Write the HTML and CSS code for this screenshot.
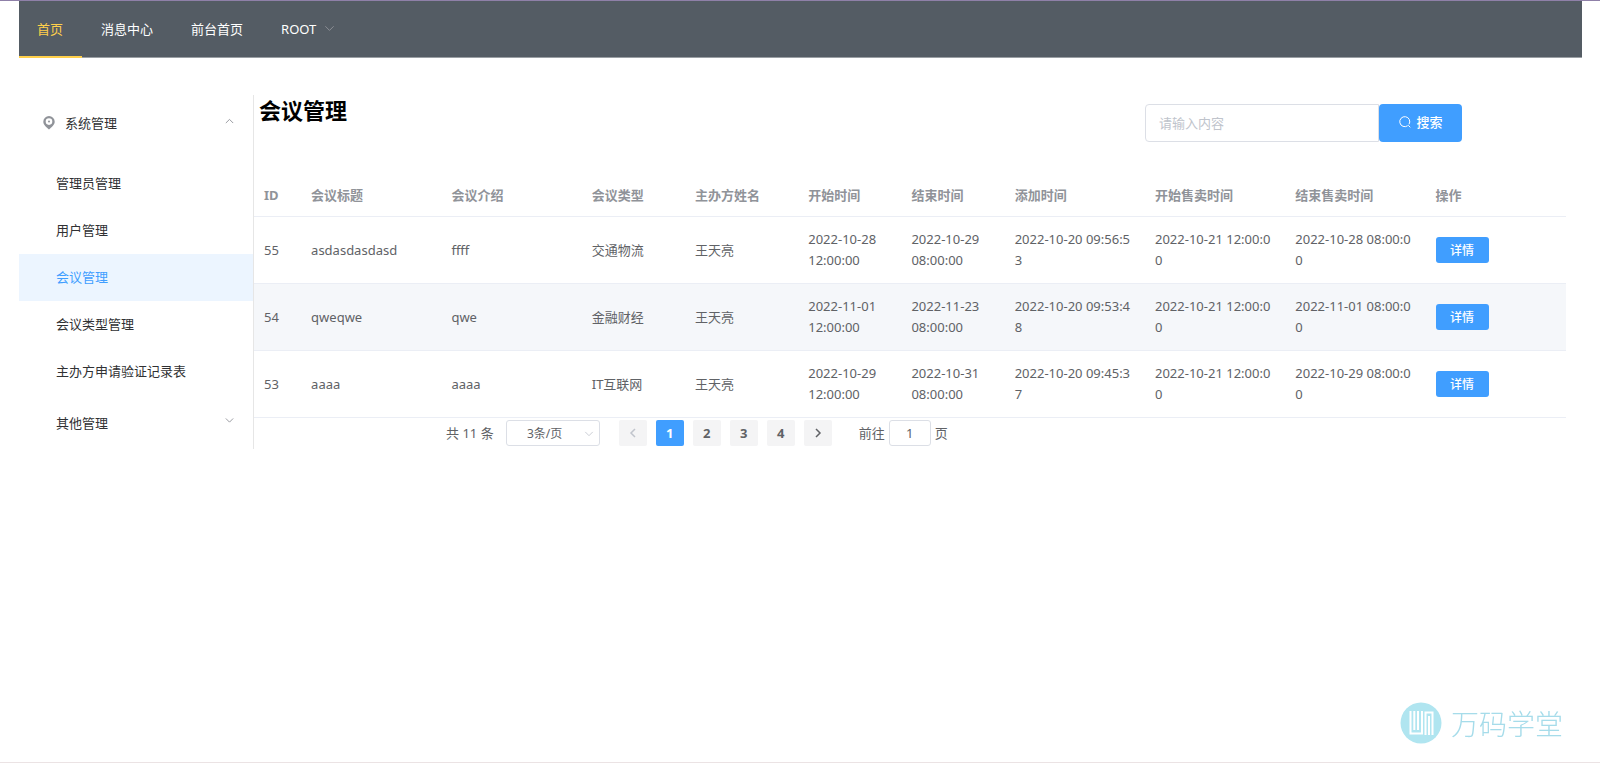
FILE: index.html
```html
<!DOCTYPE html>
<html lang="zh-CN">
<head>
<meta charset="utf-8">
<title>会议管理</title>
<link rel="stylesheet" href="styles.css">
</head>
<body>
<div class="page">
  <nav class="topnav">
    <a class="topnav-item active" href="#">首页</a>
    <a class="topnav-item" href="#">消息中心</a>
    <a class="topnav-item" href="#">前台首页</a>
    <a class="topnav-item" href="#">ROOT
      <svg class="chevron" viewBox="0 0 12 12"><path d="M1.500 2.500L6 7L10.500 2.500"/></svg>
    </a>
  </nav>

  <div class="body">
    <aside class="sidebar">
      <button class="group-title" type="button">
        <svg class="pin" viewBox="0 0 14 16"><path fill-rule="evenodd" d="M7 1a5.700 5.700 0 0 0-5.700 5.700C1.300 10.200 4.600 12 7 14.500c2.400-2.500 5.700-4.300 5.700-7.800A5.700 5.700 0 0 0 7 1zm0 2.300a3.300 3.300 0 1 1 0 6.600 3.300 3.300 0 0 1 0-6.600z"/><circle cx="7" cy="6.500" r="1"/></svg>
        <span>系统管理</span>
        <svg class="chevron" viewBox="0 0 12 12"><path d="M2 5.500L6 1.500L10 5.500"/></svg>
      </button>
      <ul class="menu">
        <li><a href="#">管理员管理</a></li>
        <li><a href="#">用户管理</a></li>
        <li><a class="active" href="#">会议管理</a></li>
        <li><a href="#">会议类型管理</a></li>
        <li><a href="#">主办方申请验证记录表</a></li>
      </ul>
      <button class="group-title other" type="button">
        <span>其他管理</span>
        <svg class="chevron" viewBox="0 0 12 12"><path d="M2 0.500L6 4.500L10 0.500"/></svg>
      </button>
    </aside>

    <main class="main">
      <header class="main-head">
        <h1>会议管理</h1>
        <form class="search">
          <input type="text" placeholder="请输入内容" aria-label="请输入内容">
          <button type="button">
            <svg viewBox="0 0 14 14"><path d="M9.700 10.700A5 5 0 1 1 11 9.300M10.300 10.300L12.300 12.300"/></svg>
            <span>搜索</span>
          </button>
        </form>
      </header>

      <table class="table">
        <colgroup>
          <col class="c-id"><col class="c-wide"><col class="c-wide"><col class="c-time"><col class="c-host">
          <col class="c-time"><col class="c-time"><col class="c-wide"><col class="c-wide"><col class="c-wide"><col class="c-wide">
        </colgroup>
        <thead>
          <tr><th>ID</th><th>会议标题</th><th>会议介绍</th><th>会议类型</th><th>主办方姓名</th><th>开始时间</th><th>结束时间</th><th>添加时间</th><th>开始售卖时间</th><th>结束售卖时间</th><th>操作</th></tr>
        </thead>
        <tbody>
          <tr><td>55</td><td>asdasdasdasd</td><td>ffff</td><td>交通物流</td><td>王天亮</td><td>2022-10-28<br>12:00:00</td><td>2022-10-29<br>08:00:00</td><td>2022-10-20 09:56:53</td><td>2022-10-21 12:00:00</td><td>2022-10-28 08:00:00</td><td><button class="detail" type="button">详情</button></td></tr>
          <tr><td>54</td><td>qweqwe</td><td>qwe</td><td>金融财经</td><td>王天亮</td><td>2022-11-01<br>12:00:00</td><td>2022-11-23<br>08:00:00</td><td>2022-10-20 09:53:48</td><td>2022-10-21 12:00:00</td><td>2022-11-01 08:00:00</td><td><button class="detail" type="button">详情</button></td></tr>
          <tr><td>53</td><td>aaaa</td><td>aaaa</td><td>IT互联网</td><td>王天亮</td><td>2022-10-29<br>12:00:00</td><td>2022-10-31<br>08:00:00</td><td>2022-10-20 09:45:37</td><td>2022-10-21 12:00:00</td><td>2022-10-29 08:00:00</td><td><button class="detail" type="button">详情</button></td></tr>
        </tbody>
      </table>

      <div class="pagination">
        <span class="total">共 11 条</span>
        <span class="size">
          <select aria-label="每页条数"><option>3条/页</option></select>
          <svg class="chevron" viewBox="0 0 12 12"><path d="M1.500 3.500L6 8L10.500 3.500"/></svg>
        </span>
        <div class="pager">
          <button type="button" disabled aria-label="上一页"><svg viewBox="0 0 12 12"><path d="M8 2L4 6L8 10"/></svg></button>
          <button type="button" class="current">1</button>
          <button type="button">2</button>
          <button type="button">3</button>
          <button type="button">4</button>
          <button type="button" aria-label="下一页"><svg viewBox="0 0 12 12"><path d="M4 2L8 6L4 10"/></svg></button>
        </div>
        <label class="jump">前往<input type="text" value="1">页</label>
      </div>
    </main>
  </div>
</div>

<div class="brand">
  <svg viewBox="0 0 42 42"><circle class="disc" cx="21" cy="21" r="20.500"/><path class="mark" d="M10.500 9V31.500H22V9M14.300 9V28M18 9V28M25.500 33V10.500H32.500V33M29 14V33"/></svg>
  <span>万码学堂</span>
</div>
</body>
</html>
```

FILE: styles.css
```css
* { box-sizing: border-box; }

body {
  margin: 0;
  min-height: 100vh;
  background: #fff;
  border-top: 1px solid #8f80a8;
  border-bottom: 1px solid #ebe3e4;
  color: #606266;
  font-family: "Noto Sans", "Noto Sans CJK SC", sans-serif;
  font-size: 13px;
  line-height: 21px;
}

button, input, select { font: inherit; color: inherit; margin: 0; }
button { border: 0; cursor: pointer; }
a { text-decoration: none; color: inherit; }
svg { fill: none; stroke: currentColor; flex: none; }

.page { padding: 0 18px 0 19px; }

.topnav {
  display: flex;
  height: 57px;
  background: #545c64;
  border-bottom: 1px solid #9a9fa4;
  color: #fff;
}
.topnav-item {
  display: flex;
  align-items: center;
  gap: 8px;
  height: 57px;
  padding: 2px 19px 0;
  border-bottom: 2px solid transparent;
}
.topnav-item.active {
  padding-left: 18px;
  color: #ffd04b;
  border-bottom-color: #ffd04b;
}

.chevron { width: 11px; height: 11px; color: #909399; }

.body { display: flex; align-items: flex-start; padding-top: 37px; }

.sidebar {
  flex: none;
  width: 235px;
  padding: 2px 0 0;
  border-right: 1px solid #e6e6e6;
  color: #303133;
}
.group-title {
  display: flex;
  align-items: center;
  width: 100%;
  height: 52px;
  padding: 0 18px 0 23px;
  background: none;
  text-align: left;
}
.group-title .chevron { margin-left: auto; }
.group-title.other { padding-left: 37px; }
.pin { width: 14px; height: 16px; margin-right: 9px; fill: #909399; stroke: none; }

.menu { list-style: none; margin: 0; padding: 11px 0 2px; }
.menu a {
  display: flex;
  align-items: center;
  height: 47px;
  padding-left: 37px;
}
.menu a.active { background: #ecf5ff; color: #409eff; }

.main { flex: 1; min-width: 0; padding-right: 16px; }

.main-head {
  display: flex;
  justify-content: space-between;
  align-items: flex-start;
  padding: 0 104px 0 5px;
  height: 79px;
}
.main-head h1 {
  margin: 0;
  color: #000;
  font-size: 22px;
  line-height: 30px;
}
.search { display: flex; padding-top: 9px; }
.search input {
  width: 234px;
  height: 38px;
  padding: 0 13px;
  border: 1px solid #dcdfe6;
  border-radius: 4px 0 0 4px;
}
.search input::placeholder { color: #c0c4cc; }
.search button {
  display: flex;
  align-items: center;
  justify-content: center;
  gap: 4px;
  width: 83px;
  height: 38px;
  padding: 0 0 2px;
  border-radius: 4px;
  background: #409eff;
  color: #fff;
  font-weight: 500;
}
.search svg { width: 14px; height: 14px; }

.table {
  width: 100%;
  table-layout: fixed;
  border-collapse: separate;
  border-spacing: 0;
}
.c-id { width: 47px; }
.c-wide { width: 140px; }
.c-time { width: 103px; }
.c-host { width: 113px; }
.table th, .table td {
  padding: 12px 9px 12px 10px;
  border-bottom: 1px solid #ebeef5;
  text-align: left;
  vertical-align: middle;
  word-break: break-all;
}
.table th { color: #909399; padding: 11px 9px 10px 10px; }
.table tbody tr:nth-child(even) { background: #f5f7fa; }
.detail {
  display: block;
  width: 53px;
  height: 26px;
  padding: 0;
  border-radius: 3px;
  background: #409eff;
  color: #fff;
  font-size: 12px;
  font-weight: 500;
}

.pagination {
  display: flex;
  align-items: center;
  padding: 2px 0 1px 192px;
}
.total { margin-right: 12px; }
.size { position: relative; }
.size select {
  display: block;
  appearance: none;
  width: 94px;
  height: 26px;
  padding: 0 16px 0 0;
  border: 1px solid #dcdfe6;
  border-radius: 3px;
  background: #fff;
  text-align: center;
  text-align-last: center;
  font-size: 12px;
}
.size .chevron {
  position: absolute;
  right: 6px;
  top: 9px;
  width: 10px;
  height: 10px;
  color: #c0c4cc;
  pointer-events: none;
}
.pager { display: flex; gap: 9px; margin: 0 27px 0 19px; }
.pager button {
  display: flex;
  align-items: center;
  justify-content: center;
  width: 28px;
  height: 26px;
  padding: 0;
  border-radius: 2px;
  background: #f4f4f5;
  font-weight: 700;
}
.pager button.current { background: #409eff; color: #fff; }
.pager button:disabled { color: #c0c4cc; }
.pager svg { width: 12px; height: 12px; stroke-width: 1.5; }
.jump { display: flex; align-items: center; gap: 4px; }
.jump input {
  width: 42px;
  height: 26px;
  padding: 0;
  border: 1px solid #dcdfe6;
  border-radius: 3px;
  text-align: center;
}

.brand {
  position: fixed;
  right: 37px;
  bottom: 19px;
  display: flex;
  align-items: center;
  gap: 9px;
  color: #a6dcea;
  font-family: "Noto Sans CJK SC", sans-serif;
  font-size: 28px;
  font-weight: 300;
  line-height: 42px;
}
.brand svg { width: 42px; height: 42px; }
.brand .disc { fill: #b0e5f0; stroke: none; }
.brand .mark { stroke: #fff; stroke-width: 2; }
```
